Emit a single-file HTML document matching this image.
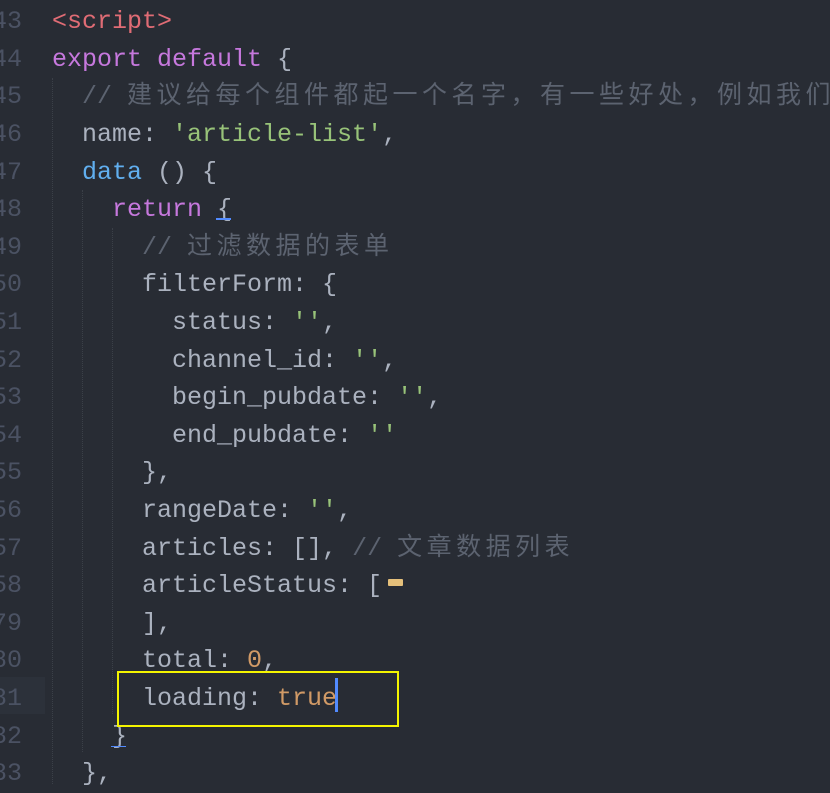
<!DOCTYPE html>
<html><head><meta charset="utf-8"><style>
html,body{margin:0;padding:0;background:#282c34;width:830px;height:785px;overflow:hidden}
.l{position:absolute;left:0;height:37.6px;line-height:37.6px;font-family:"Liberation Mono","Noto Sans CJK SC",monospace;font-size:25px;color:#abb2bf;white-space:pre}
.n{position:absolute;left:-40px;width:62px;text-align:right;color:#4b5263}
.c{position:absolute;left:52px}
.t{color:#e06c75}.k{color:#c678dd}.s{color:#98c379}.f{color:#61afef}.o{color:#d19a66}.cm{color:#5c6370}
.z{letter-spacing:4.5px}
.g{position:absolute;width:0;border-left:1px dotted #3b4048}
</style></head><body>
<div style="position:absolute;left:0;top:677px;width:45px;height:37px;background:#2c313a"></div>
<div class="g" style="left:52px;top:78px;height:706px"></div>
<div class="g" style="left:82px;top:190px;height:562px"></div>
<div class="g" style="left:112px;top:228px;height:486px"></div>

<div class="l" style="top:3px"><span class="n">43</span><span class="c"><span class="t">&lt;script&gt;</span></span></div>
<div class="l" style="top:41px"><span class="n">44</span><span class="c"><span class="k">export default</span> {</span></div>
<div class="l" style="top:78px"><span class="n">45</span><span class="c">  <span class="cm">// <span class="z">建议给每个组件都起一个名字，有一些好处，例如我们</span></span></span></div>
<div class="l" style="top:116px"><span class="n">46</span><span class="c">  name: <span class="s">'article-list'</span>,</span></div>
<div class="l" style="top:154px"><span class="n">47</span><span class="c">  <span class="f">data</span> () {</span></div>
<div class="l" style="top:191px"><span class="n">48</span><span class="c">    <span class="k">return</span> {</span></div>
<div class="l" style="top:229px"><span class="n">49</span><span class="c">      <span class="cm">// <span class="z">过滤数据的表单</span></span></span></div>
<div class="l" style="top:266px"><span class="n">50</span><span class="c">      filterForm: {</span></div>
<div class="l" style="top:304px"><span class="n">51</span><span class="c">        status: <span class="s">''</span>,</span></div>
<div class="l" style="top:342px"><span class="n">52</span><span class="c">        channel_id: <span class="s">''</span>,</span></div>
<div class="l" style="top:379px"><span class="n">53</span><span class="c">        begin_pubdate: <span class="s">''</span>,</span></div>
<div class="l" style="top:417px"><span class="n">54</span><span class="c">        end_pubdate: <span class="s">''</span></span></div>
<div class="l" style="top:454px"><span class="n">55</span><span class="c">      },</span></div>
<div class="l" style="top:492px"><span class="n">56</span><span class="c">      rangeDate: <span class="s">''</span>,</span></div>
<div class="l" style="top:530px"><span class="n">57</span><span class="c">      articles: [], <span class="cm">// <span class="z">文章数据列表</span></span></span></div>
<div class="l" style="top:567px"><span class="n">58</span><span class="c">      articleStatus: [</span></div>
<div class="l" style="top:605px"><span class="n">79</span><span class="c">      ],</span></div>
<div class="l" style="top:642px"><span class="n">80</span><span class="c">      total: <span class="o">0</span>,</span></div>
<div class="l" style="top:680px"><span class="n">81</span><span class="c">      loading: <span class="o">true</span></span></div>
<div class="l" style="top:718px"><span class="n">82</span><span class="c">    }</span></div>
<div class="l" style="top:755px"><span class="n">83</span><span class="c">  },</span></div>

<div style="position:absolute;left:388px;top:579px;width:15px;height:7px;background:#e5c07b;border-radius:1px"></div>
<div style="position:absolute;left:216px;top:218px;width:15px;height:2px;background:#528bff"></div>
<div style="position:absolute;left:111px;top:746px;width:15px;height:1px;background:#528bff"></div>
<div style="position:absolute;left:117px;top:671px;width:278px;height:52px;border:2px solid #f5f500"></div>
<div style="position:absolute;left:335px;top:678px;width:3px;height:34px;background:#528bff"></div>
</body></html>
